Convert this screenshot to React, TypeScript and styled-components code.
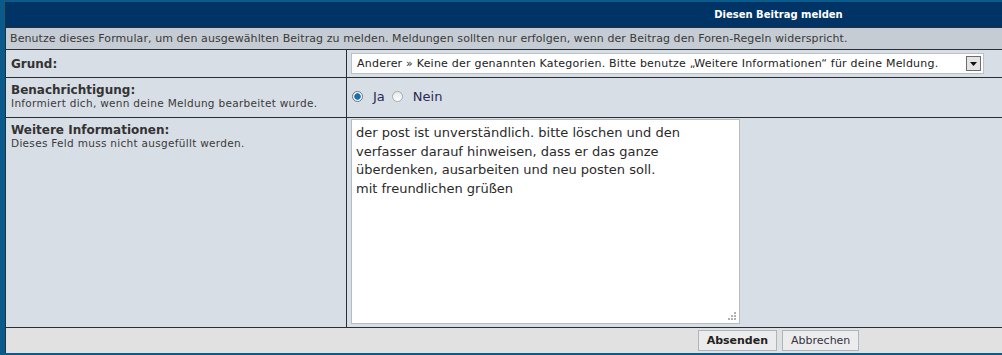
import React from 'react'
import styled, { createGlobalStyle } from 'styled-components'

const Global = createGlobalStyle`
  html, body {
    margin: 0;
    padding: 0;
    background: #ffffff;
    overflow: hidden;
  }
  body {
    font-family: 'DejaVu Sans', Verdana, sans-serif;
  }
`

const Frame = styled.div`
  width: 1546px;
  border-left: 5px solid #0b5a8c;
  border-top: 2px solid #0b5a8c;
  border-bottom: 2px solid #0b5a8c;
  background: #2b2e33;
`

const Table = styled.div`
  display: grid;
  grid-template-columns: 340px 1fr;
  gap: 1px;
  padding-left: 1px;
`

const Head = styled.div`
  grid-column: 1 / -1;
  height: 25px;
  background: #003366;
  color: #ffffff;
  font-weight: bold;
  font-size: 10px;
  display: flex;
  align-items: center;
  justify-content: center;
`

const Intro = styled.div`
  grid-column: 1 / -1;
  height: 21px;
  background: #c5ccd3;
  color: #3a3a3a;
  font-size: 11px;
  letter-spacing: 0.08px;
  display: flex;
  align-items: center;
  padding-left: 4px;
`

const LabelCell = styled.div<{ $tall?: number; $top?: number }>`
  background: #d8dee6;
  min-height: ${p => p.$tall ?? 27}px;
  padding: ${p => p.$top ?? 5}px 5px 0;
  box-sizing: border-box;
  color: #333333;
`

const ValueCell = styled.div<{ $pad?: string }>`
  background: #d8dee6;
  padding: ${p => p.$pad ?? '4px 4px'};
  box-sizing: border-box;
  display: flex;
  align-items: flex-start;
`

const Label = styled.div`
  font-weight: bold;
  font-size: 12px;
  line-height: 14px;
`

const Hint = styled.div`
  font-size: 10.5px;
  letter-spacing: 0.3px;
  line-height: 13px;
  color: #3a3a3a;
`

const Select = styled.div`
  width: 633px;
  height: 21px;
  box-sizing: border-box;
  background: #ffffff;
  border: 1px solid #b8c0c8;
  display: flex;
  align-items: center;
  justify-content: space-between;
  padding: 0 2px 0 5px;
  font-size: 11px;
  letter-spacing: 0.22px;
  color: #222222;
`

const Arrow = styled.div`
  width: 15px;
  height: 15px;
  box-sizing: border-box;
  border: 1px solid #6d6d6d;
  background: #e4e4e4;
  display: flex;
  align-items: center;
  justify-content: center;
`

const Radios = styled.div`
  display: flex;
  align-items: center;
  font-size: 13px;
  color: #2a2a55;
  padding-top: 7px;
`

const Radio = styled.span<{ $on?: boolean }>`
  width: 11px;
  height: 11px;
  border-radius: 50%;
  box-sizing: border-box;
  border: 1px solid ${p => (p.$on ? '#6e7780' : '#a5acb3')};
  background: ${p =>
    p.$on
      ? 'radial-gradient(circle, #1b6fb0 0 2.5px, #2c86c8 3px, #f4f6f8 3.5px)'
      : 'linear-gradient(#e6e8ea, #ffffff)'};
  margin: 0 10px 0 1px;
`

const RadioText = styled.span`
  margin-right: 6px;
`

const TextArea = styled.div`
  position: relative;
  width: 389px;
  height: 205px;
  box-sizing: border-box;
  background: #ffffff;
  border: 1px solid #b3bcc6;
  padding: 4px 4px;
  font-size: 13px;
  line-height: 18.7px;
  color: #2a2a2a;
  white-space: pre-line;
`

const Grip = styled.svg`
  position: absolute;
  right: 3px;
  bottom: 3px;
`

const Foot = styled.div`
  grid-column: 1 / -1;
  height: 25px;
  background: #e1e1e1;
  display: flex;
  align-items: center;
  justify-content: center;
  gap: 5px;
`

const Button = styled.div<{ $main?: boolean }>`
  height: 21px;
  box-sizing: border-box;
  border: 1px solid #aab6c3;
  background: #ececec;
  padding: 0 8px;
  display: flex;
  align-items: center;
  font-size: 11px;
  font-weight: ${p => (p.$main ? 'bold' : 'normal')};
  color: ${p => (p.$main ? '#222222' : '#333344')};
`

const App = () => (
  <>
    <Global />
    <Frame>
      <Table>
        <Head>Diesen Beitrag melden</Head>
        <Intro>
          Benutze dieses Formular, um den ausgewählten Beitrag zu melden. Meldungen sollten nur erfolgen, wenn der Beitrag den Foren-Regeln widerspricht.
        </Intro>

        <LabelCell $top={7}>
          <Label>Grund:</Label>
        </LabelCell>
        <ValueCell $pad="3px 4px 3px 4px">
          <Select>
            <span>Anderer » Keine der genannten Kategorien. Bitte benutze „Weitere Informationen“ für deine Meldung.</span>
            <Arrow>
              <svg width="7" height="4" viewBox="0 0 7 4">
                <path d="M0 0h7L3.5 4z" fill="#111" />
              </svg>
            </Arrow>
          </Select>
        </ValueCell>

        <LabelCell $tall={39}>
          <Label>Benachrichtigung:</Label>
          <Hint>Informiert dich, wenn deine Meldung bearbeitet wurde.</Hint>
        </LabelCell>
        <ValueCell>
          <Radios>
            <Radio $on />
            <RadioText>Ja</RadioText>
            <Radio />
            <RadioText>Nein</RadioText>
          </Radios>
        </ValueCell>

        <LabelCell $tall={209}>
          <Label>Weitere Informationen:</Label>
          <Hint>Dieses Feld muss nicht ausgefüllt werden.</Hint>
        </LabelCell>
        <ValueCell $pad="1px 4px 3px 4px">
          <TextArea>
            {'der post ist unverständlich. bitte löschen und den\nverfasser darauf hinweisen, dass er das ganze\nüberdenken, ausarbeiten und neu posten soll.\nmit freundlichen grüßen'}
            <Grip width="9" height="9" viewBox="0 0 9 9">
              <g fill="#b0b0b0">
                <rect x="7" y="1" width="2" height="2" />
                <rect x="4" y="4" width="2" height="2" />
                <rect x="7" y="4" width="2" height="2" />
                <rect x="1" y="7" width="2" height="2" />
                <rect x="4" y="7" width="2" height="2" />
                <rect x="7" y="7" width="2" height="2" />
              </g>
            </Grip>
          </TextArea>
        </ValueCell>

        <Foot>
          <Button $main>Absenden</Button>
          <Button>Abbrechen</Button>
        </Foot>
      </Table>
    </Frame>
  </>
)

export default App
